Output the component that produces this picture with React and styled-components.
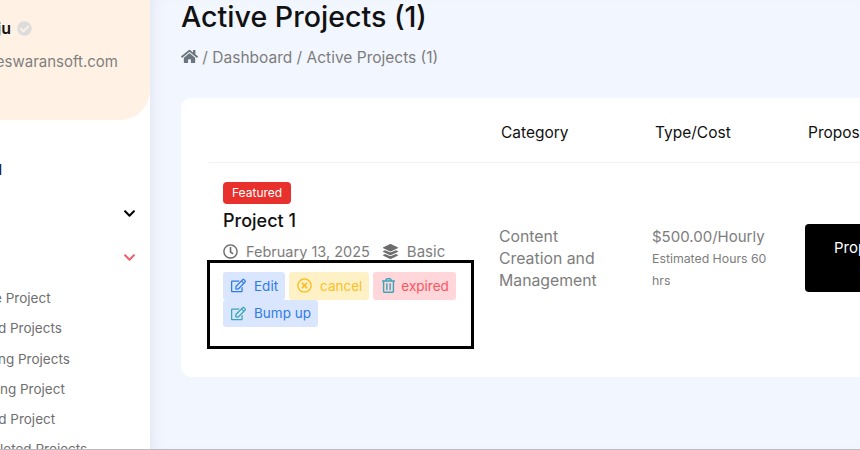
import styled, { createGlobalStyle } from "styled-components"
import { FaHome, FaCheckCircle, FaRegClock, FaLayerGroup, FaRegEdit, FaRegTimesCircle, FaRegTrashAlt, FaChevronDown } from "react-icons/fa";

const GlobalStyle = createGlobalStyle`
  html, body { margin: 0; height: 100%; }
  body { font-family: Inter, "Noto Sans", sans-serif; overflow: hidden; }
  #root { height: 450px; }
`

const menuItems = [
  "Active Project",
  "Posted Projects",
  "Pending Projects",
  "Ongoing Project",
  "Closed Project",
  "Completed Projects",
]

const App = () => {
  return (
    <>
      <GlobalStyle />
      <Page>
        <SideBar>
          <Profile>
            <UserName>Raju <FaCheckCircle /></UserName>
            <Email>info@eswaransoft.com</Email>
          </Profile>
          <MainLink>Dashboard</MainLink>
          <MenuRow><FaChevronDown /></MenuRow>
          <MenuRow $open><FaChevronDown /></MenuRow>
          <SubMenu>
            {menuItems.map((item) => <SubItem key={item}>{item}</SubItem>)}
          </SubMenu>
        </SideBar>
        <Main>
          <Title>Active Projects (1)</Title>
          <Crumbs><FaHome /> / Dashboard / Active Projects (1)</Crumbs>
          <Card>
            <HeadRow>
              <HeadCell />
              <HeadCell>Category</HeadCell>
              <HeadCell>Type/Cost</HeadCell>
              <HeadCell>Proposals</HeadCell>
            </HeadRow>
            <BodyRow>
              <ProjectCell>
                <Badge>Featured</Badge>
                <ProjectName>Project 1</ProjectName>
                <Meta>
                  <FaRegClock /> <span>February 13, 2025</span>
                  <FaLayerGroup /> <span>Basic</span>
                </Meta>
                <Actions>
                  <Action $kind="edit"><FaRegEdit />Edit</Action>
                  <Action $kind="cancel"><FaRegTimesCircle />cancel</Action>
                  <Action $kind="expired"><FaRegTrashAlt />expired</Action>
                  <Action $kind="bump"><FaRegEdit />Bump up</Action>
                </Actions>
                <Highlight />
              </ProjectCell>
              <TextCell $right={36} $size={15.8}>Content Creation and Management</TextCell>
              <TextCell $right={30} $size={15}>
                $500.00/Hourly
                <Small>Estimated Hours 60 hrs</Small>
              </TextCell>
              <ButtonCell><Proposal>Proposals (0)</Proposal></ButtonCell>
            </BodyRow>
          </Card>
        </Main>
      </Page>
    </>
  )
}
export default App

const Page = styled.div`
  display: flex;
  width: 860px;
  height: 450px;
  overflow: hidden;
  border-bottom: 1px solid #bbb;
  box-sizing: border-box;
`
const SideBar = styled.aside`
  flex: 0 0 290px;
  min-width: 0;
  margin-left: -140px;
  background: #fff;
  position: relative;
  z-index: 1;
`
const Profile = styled.div`
  height: 120px;
  box-sizing: border-box;
  padding-top: 18px;
  background: #fff2e5;
  border-bottom-right-radius: 30px;
`
const UserName = styled.div`
  font-size: 16px;
  font-weight: 600;
  color: #111;
  text-align: right;
  padding-right: 118px;
  line-height: 20px;
  svg { color: #dcdcdc; font-size: 15px; vertical-align: -2px; margin-left: 2px; }
`
const Email = styled.div`
  font-size: 15px;
  color: #7f7f7f;
  margin-top: 14px;
  white-space: nowrap;
  text-align: right;
  padding-right: 32px;
`
const MainLink = styled.div`
  font-size: 14px;
  font-weight: 600;
  color: #222;
  margin-top: 40px;
  text-align: right;
  padding-right: 148px;
  line-height: 20px;
`
const MenuRow = styled.div`
  display: flex;
  justify-content: flex-end;
  padding-right: 14px;
  margin-top: ${(p) => (p.$open ? "32px" : "27px")};
  height: 12px;
  align-items: center;
  font-size: 13px;
  color: ${(p) => (p.$open ? "#f4606c" : "#000")};
`
const SubMenu = styled.ul`
  list-style: none;
  margin: 20px 0 0;
  padding: 0 0 0 102px;
`
const SubItem = styled.li`
  font-size: 13.5px;
  color: #6f6f6f;
  height: 30.3px;
  line-height: 30px;
  white-space: nowrap;
`
const Main = styled.main`
  flex: 1;
  min-width: 0;
  padding: 0 0 0 31px;
  background: #f2f6fe;
  box-shadow: inset 12px 0 14px -10px #dfe3f0;
`
const Title = styled.h1`
  margin: -3px 0 0;
  font-size: 28.6px;
  font-weight: 500;
  line-height: 40px;
  color: #111;
`
const Crumbs = styled.div`
  margin-top: 9px;
  font-size: 15.5px;
  line-height: 24px;
  color: #7d7d7d;
  svg { color: #6c757d; font-size: 17px; vertical-align: -2px; }
`
const Card = styled.div`
  margin-top: 28px;
  width: 760px;
  height: 279px;
  background: #fff;
  border-radius: 10px;
  padding-left: 28px;
  box-sizing: border-box;
`
const HeadRow = styled.div`
  display: grid;
  grid-template-columns: 292px 154px 153px 1fr;
  height: 60px;
  padding-top: 4px;
  align-items: center;
  border-bottom: 1px solid #f1f1f1;
`
const HeadCell = styled.div`
  font-size: 15.5px;
  color: #111;
`
const BodyRow = styled.div`
  display: grid;
  grid-template-columns: 290px 153px 153px 1fr;
  padding-top: 18px;
`
const ProjectCell = styled.div`
  position: relative;
  padding-left: 14px;
`
const Badge = styled.span`
  display: inline-block;
  padding: 0 9px;
  height: 22px;
  line-height: 22px;
  font-size: 12px;
  color: #fff;
  background: #e8302c;
  border-radius: 4px;
`
const ProjectName = styled.div`
  margin-top: 4px;
  font-size: 18px;
  font-weight: 500;
  line-height: 26px;
  color: #111;
`
const Meta = styled.div`
  display: flex;
  align-items: center;
  gap: 8px;
  margin-top: 4px;
  height: 26px;
  font-size: 14.5px;
  color: #7d7d7d;
  svg { color: #6c6c6c; font-size: 15px; }
  span:first-of-type { margin-right: 5px; }
  span:last-of-type { font-size: 15px; margin-left: 1px; }
`
const colors = {
  edit: { bg: "#d9e6fd", text: "#2f7be8", icon: "#2f7be8", gap: 8 },
  cancel: { bg: "#fff1c6", text: "#fbbf24", icon: "#fbbf24", gap: 8 },
  expired: { bg: "#ffd6d9", text: "#f9545f", icon: "#3aa6b9", gap: 5 },
  bump: { bg: "#d9e6fd", text: "#2f7be8", icon: "#3aa6b9", gap: 8 },
}
const Actions = styled.div`
  display: flex;
  flex-wrap: wrap;
  column-gap: 4px;
  margin-top: 8px;
  width: 245px;
`
const Action = styled.div`
  display: flex;
  align-items: center;
  gap: ${(p) => colors[p.$kind].gap}px;
  height: 27.5px;
  padding: 0 7px 0 8px;
  border-radius: 3px;
  font-size: 13.5px;
  background: ${(p) => colors[p.$kind].bg};
  color: ${(p) => colors[p.$kind].text};
  svg { font-size: 15px; color: ${(p) => colors[p.$kind].icon}; }
`
const Highlight = styled.div`
  position: absolute;
  left: -2px;
  top: 79px;
  width: 267px;
  height: 89px;
  box-sizing: border-box;
  border: 3px solid #000;
`
const TextCell = styled.div`
  padding-top: 45px;
  padding-right: ${(p) => p.$right}px;
  font-size: ${(p) => p.$size}px;
  line-height: 22px;
  color: #7d7d7d;
`
const Small = styled.div`
  font-size: 12.3px;
`
const ButtonCell = styled.div`
  padding-top: 43px;
`
const Proposal = styled.div`
  width: 128px;
  height: 68px;
  box-sizing: border-box;
  padding: 13px 20px;
  background: #000;
  color: #fff;
  border-radius: 4px;
  font-size: 15px;
  line-height: 22px;
  text-align: center;
`
